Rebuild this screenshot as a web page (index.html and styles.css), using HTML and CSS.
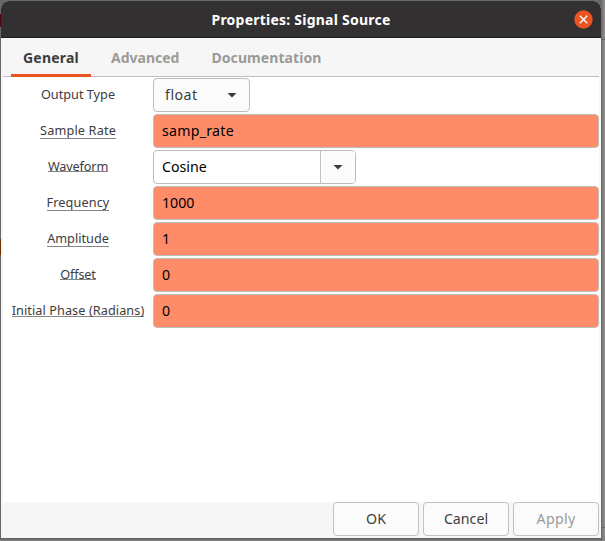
FILE: index.html
```html
<!DOCTYPE html>
<html lang="en">
<head>
<meta charset="utf-8">
<title>Properties: Signal Source</title>
<link rel="stylesheet" href="styles.css">
</head>
<body>
<main class="window">
  <header class="titlebar">
    <h1 class="title">Properties: Signal Source</h1>
    <button class="close" aria-label="Close"><svg width="19" height="19" viewBox="0 0 19 19"><circle cx="9.5" cy="9.5" r="9.2" fill="#e95420"/><path d="M6.3 6.3l6.4 6.4M12.7 6.3l-6.4 6.4" stroke="#fff" stroke-width="1.4" stroke-linecap="square"/></svg></button>
  </header>
  <nav class="tabs">
    <span class="tab active"><b class="t-general">General</b></span>
    <span class="tab"><b>Advanced</b></span>
    <span class="tab"><b class="t-doc">Documentation</b></span>
  </nav>
  <section class="form">
    <div class="row"><div class="label"><span>Output Type</span></div><div class="select"><span class="v-float">float</span><i class="arrow"></i></div></div>
    <div class="row"><div class="label"><span class="line low l-rate">Sample Rate</span></div><div class="entry"><span class="v-rate">samp_rate</span></div></div>
    <div class="row"><div class="label"><span class="line l-wave">Waveform</span></div><div class="combo"><span class="combo-text">Cosine</span><span class="combo-button"><i class="arrow"></i></span></div></div>
    <div class="row"><div class="label"><span class="line low l-freq">Frequency</span></div><div class="entry"><span>1000</span></div></div>
    <div class="row"><div class="label"><span class="line low">Amplitude</span></div><div class="entry"><span>1</span></div></div>
    <div class="row"><div class="label"><span class="line l-off">Offset</span></div><div class="entry"><span>0</span></div></div>
    <div class="row"><div class="label"><span class="line mid l-phase">Initial Phase (Radians)</span></div><div class="entry"><span>0</span></div></div>
  </section>
  <footer class="actions">
    <button>OK</button><button>Cancel</button><button class="v-apply" disabled>Apply</button>
  </footer>
</main>
</body>
</html>
```
FILE: styles.css
```css
* { box-sizing: border-box; }
body {
  margin: 0;
  width: 605px;
  height: 541px;
  overflow: hidden;
  padding: 1px 4px 3px 1px;
  background:
    linear-gradient(#55000f, #55000f) 0 14px / 1px 13px no-repeat,
    linear-gradient(#713200, #713200) 0 239px / 1px 16px no-repeat,
    linear-gradient(#666, #666) 601px 39px / 4px 1px no-repeat,
    linear-gradient(#666, #666) 601px 527px / 4px 1px no-repeat,
    linear-gradient(#5c5c5c, #858585) 0 538px / 601px 3px no-repeat,
    linear-gradient(90deg, #686868 0, #686868 601px, #757473 602px, #92918f 605px);
  font: 14.2px "Noto Sans", sans-serif;
  color: #3d3d3d;
}
button { font: inherit; color: inherit; padding: 0; }
.window {
  width: 600px;
  height: 537px;
  display: flex;
  flex-direction: column;
  background: #f6f6f6;
  border-radius: 8px 8px 0 0;
  overflow: hidden;
}
.titlebar {
  height: 37px;
  flex: none;
  display: grid;
  grid-template-columns: 1fr auto 1fr;
  align-items: center;
  background: #323030;
  border-bottom: 1px solid #1d1d1d;
}
.title { grid-column: 2; margin: 0; font-size: 14px; font-weight: 700; letter-spacing: .23px; color: #fff; }
.close { justify-self: end; width: 19px; height: 19px; margin-right: 8px; border: 0; background: none; }
.close svg { display: block; }
.tabs {
  height: 39px;
  flex: none;
  display: flex;
  margin: 0 2px;
  padding-left: 8px;
  gap: 8px;
  border-bottom: 1px solid #bfbfbf;
  color: #9b9a98;
  font-size: 14px;
}
.tab { height: 39px; padding: 0 12px; line-height: 39px; white-space: nowrap; }
.active { width: 80px; color: #3d3d3d; border-bottom: 3px solid #e95420; }
.t-general { letter-spacing: .2px; }
.t-doc { letter-spacing: .08px; }
.form { flex: 1; min-height: 0; margin: 0 2px; padding-top: 1px; background: #fff; }
.row { height: 34px; margin-bottom: 2px; display: flex; }
.label { width: 150px; display: flex; justify-content: center; align-items: flex-start; padding-top: 8px; font-size: 12.7px; line-height: 17px; white-space: nowrap; }
.line { height: 14px; border-bottom: 1px solid #858585; }
.low { height: 17px; }
.mid { height: 15px; }
.l-rate { letter-spacing: .15px; }
.l-wave { letter-spacing: -.15px; }
.l-freq { letter-spacing: .1px; }
.l-off { letter-spacing: -.2px; }
.l-phase { letter-spacing: .08px; }
.entry, .select, .combo { display: flex; align-items: center; border: 1px solid #bfbdbb; border-radius: 4px; }
.entry { flex: 1; padding: 0 0 1px 8px; background: #ff8c69; color: #000; }
.select { width: 97px; justify-content: space-between; padding: 0 12px 0 11px; background: #fbfbfb; }
.select span { padding-bottom: 1px; }
.combo { width: 203px; background: #fff; color: #000; overflow: hidden; }
.combo-text { flex: 1; padding: 0 0 1px 8px; }
.combo-button { width: 35px; height: 32px; display: flex; align-items: center; justify-content: center; border-left: 1px solid #c3c1bf; background: #fbfbfb; }
.v-float { letter-spacing: .5px; }
.v-rate { letter-spacing: .25px; }
.arrow { width: 10px; height: 5px; background: #3a3a3a; clip-path: polygon(0 0, 100% 0, 50% 100%); }
.actions { height: 36px; flex: none; display: flex; justify-content: flex-end; gap: 4px; padding-right: 2px; }
.actions button { width: 86px; height: 34px; padding-bottom: 1px; border: 1px solid #c3c1bf; border-radius: 4px; background: #fbfbfb; }
.actions button:disabled { color: #9b9a98; }
.v-apply { letter-spacing: .3px; }
```
